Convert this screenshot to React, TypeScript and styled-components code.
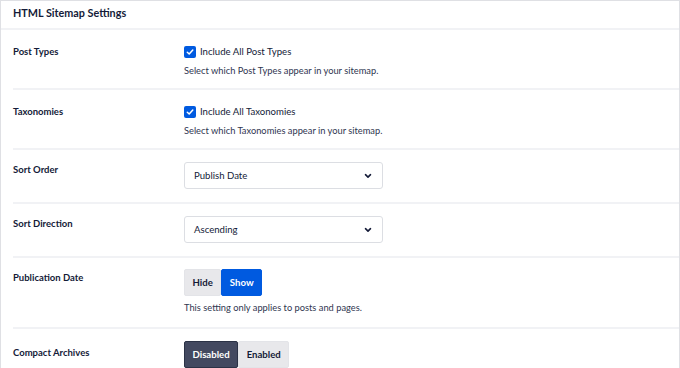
import React from 'react';
import styled, { createGlobalStyle } from 'styled-components';

const GlobalStyle = createGlobalStyle`
  html, body {
    margin: 0;
    padding: 0;
    background: #ffffff;
  }
  body {
    font-family: Lato, "Liberation Sans", sans-serif;
    color: #141b38;
  }
`;

const Panel = styled.div`
  width: 680px;
  height: 368px;
  box-sizing: border-box;
  border: 1px solid #dfe0e4;
  border-bottom: none;
  background: #ffffff;
  overflow: hidden;
`;

const Header = styled.div`
  height: 29px;
  padding: 0 12px 5px;
  display: flex;
  align-items: center;
  box-sizing: border-box;
  border-bottom: 2px solid #f1f2f5;
  font-size: 10.8px;
  font-weight: 700;
  color: #141b38;
`;

const Row = styled.div<{ $top: number; $bottom: number }>`
  margin-left: 12px;
  display: grid;
  grid-template-columns: 171px 1fr;
  padding-top: ${(p) => p.$top}px;
  padding-bottom: ${(p) => p.$bottom}px;
  border-bottom: 2px solid #f1f2f5;

  &:last-child {
    border-bottom: none;
  }
`;

const Label = styled.div<{ $offset?: number }>`
  font-size: 9.5px;
  line-height: 14px;
  font-weight: 700;
  color: #141b38;
  margin-top: ${(p) => p.$offset ?? 0}px;
`;

const Control = styled.div`
  display: flex;
  flex-direction: column;
  align-items: flex-start;
`;

const CheckLine = styled.label`
  display: flex;
  align-items: center;
  gap: 4px;
  font-size: 9.6px;
  line-height: 14px;
  color: #141b38;
`;

const Box = styled.span`
  width: 12px;
  height: 12px;
  border-radius: 2px;
  background: #005ae0;
  display: flex;
  align-items: center;
  justify-content: center;
`;

const Help = styled.div`
  margin-top: 5px;
  font-size: 9.3px;
  line-height: 14px;
  color: #2f3650;
`;

const Select = styled.div`
  width: 199px;
  height: 27px;
  box-sizing: border-box;
  border: 1px solid #dcdee3;
  border-radius: 3px;
  padding: 0 10px 0 9px;
  display: flex;
  align-items: center;
  justify-content: space-between;
  font-size: 9.6px;
  color: #141b38;
`;

const Toggle = styled.div`
  display: flex;
`;

const ToggleButton = styled.span<{ $active: boolean; $tone: 'blue' | 'dark' }>`
  height: 27px;
  box-sizing: border-box;
  padding: 0 7.5px;
  display: flex;
  align-items: center;
  font-size: 9.6px;
  font-weight: 700;
  border-radius: 2px;
  border: 1px solid
    ${(p) => (p.$active ? (p.$tone === 'blue' ? '#005ae0' : '#2b3246') : '#e3e4e8')};
  background: ${(p) =>
    p.$active ? (p.$tone === 'blue' ? '#005ae0' : '#434960') : '#e8e8eb'};
  color: ${(p) => (p.$active ? '#ffffff' : '#141b38')};
`;

const Check = () => (
  <Box>
    <svg width="8" height="8" viewBox="0 0 8 8">
      <path d="M1.3 4.2 L3.2 6 L6.8 2" fill="none" stroke="#fff" strokeWidth="1.5" strokeLinecap="round" strokeLinejoin="round" />
    </svg>
  </Box>
);

const Chevron = () => (
  <svg width="8" height="6" viewBox="0 0 8 6">
    <path d="M1.5 1.7 L4 4.1 L6.5 1.7" fill="none" stroke="#141b38" strokeWidth="1.6" strokeLinecap="round" strokeLinejoin="round" />
  </svg>
);

export default function App() {
  return (
    <>
      <GlobalStyle />
      <Panel>
        <Header>HTML Sitemap Settings</Header>

        <Row $top={15} $bottom={10}>
          <Label>Post Types</Label>
          <Control>
            <CheckLine>
              <Check />
              Include All Post Types
            </CheckLine>
            <Help>Select which Post Types appear in your sitemap.</Help>
          </Control>
        </Row>

        <Row $top={15} $bottom={10}>
          <Label>Taxonomies</Label>
          <Control>
            <CheckLine>
              <Check />
              Include All Taxonomies
            </CheckLine>
            <Help>Select which Taxonomies appear in your sitemap.</Help>
          </Control>
        </Row>

        <Row $top={12} $bottom={13}>
          <Label $offset={1}>Sort Order</Label>
          <Control>
            <Select>
              Publish Date
              <Chevron />
            </Select>
          </Control>
        </Row>

        <Row $top={12} $bottom={13}>
          <Label $offset={1}>Sort Direction</Label>
          <Control>
            <Select>
              Ascending
              <Chevron />
            </Select>
          </Control>
        </Row>

        <Row $top={11} $bottom={12}>
          <Label $offset={2}>Publication Date</Label>
          <Control>
            <Toggle>
              <ToggleButton $active={false} $tone="blue">Hide</ToggleButton>
              <ToggleButton $active={true} $tone="blue">Show</ToggleButton>
            </Toggle>
            <Help>This setting only applies to posts and pages.</Help>
          </Control>
        </Row>

        <Row $top={12} $bottom={0}>
          <Label $offset={5}>Compact Archives</Label>
          <Control>
            <Toggle>
              <ToggleButton $active={true} $tone="dark">Disabled</ToggleButton>
              <ToggleButton $active={false} $tone="dark">Enabled</ToggleButton>
            </Toggle>
          </Control>
        </Row>
      </Panel>
    </>
  );
}
